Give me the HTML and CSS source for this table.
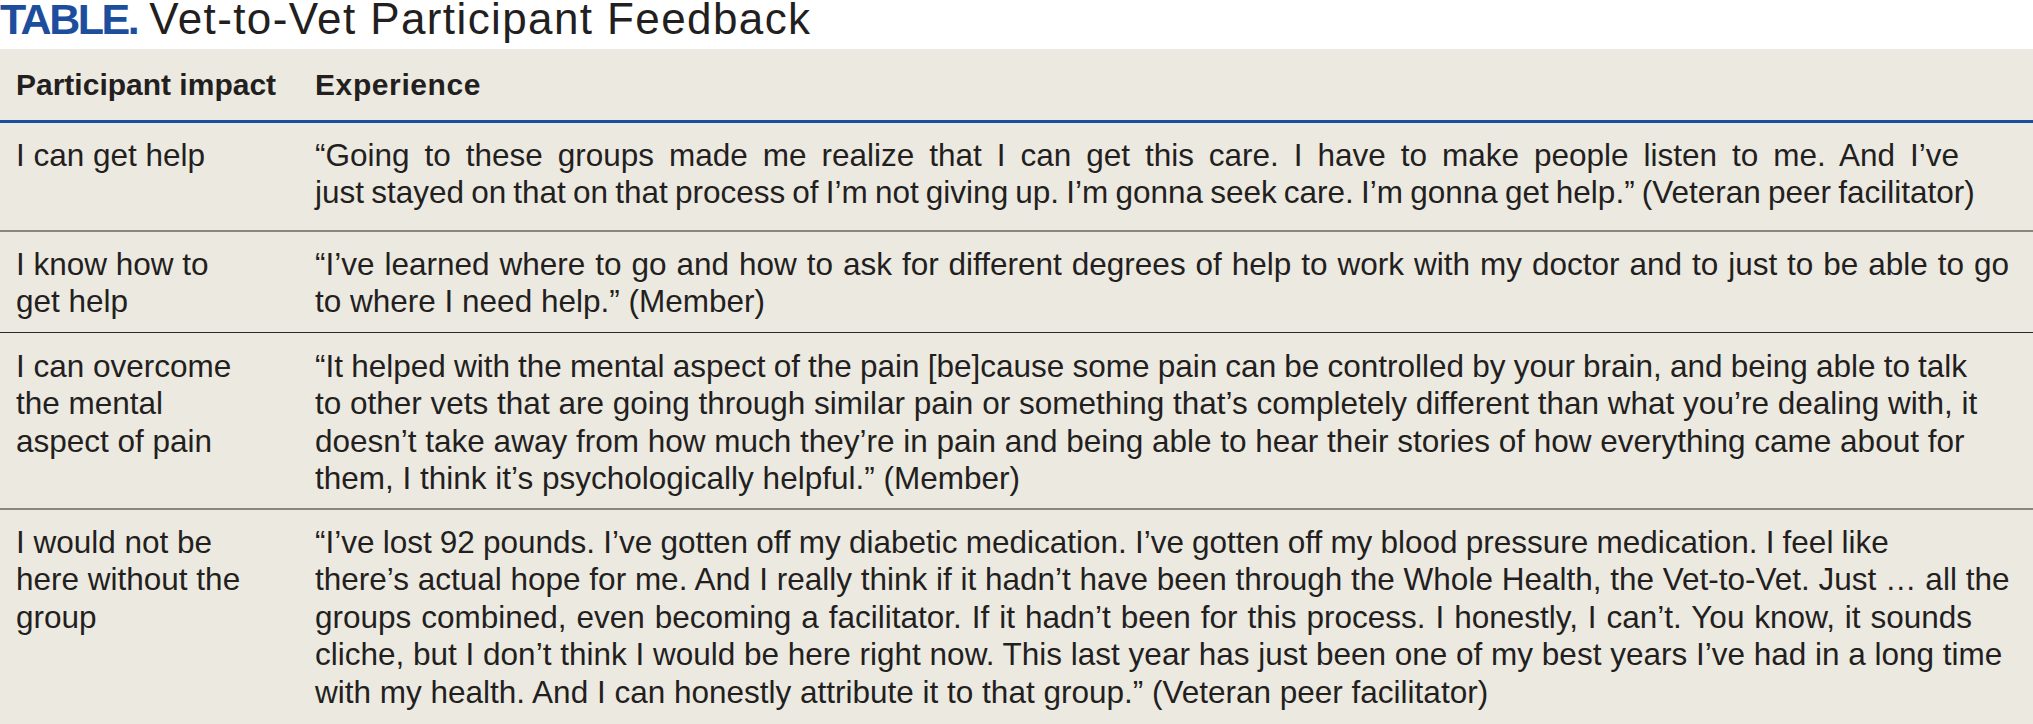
FILE: index.html
```html
<!DOCTYPE html>
<html lang="en">
<head>
<meta charset="utf-8">
<title>TABLE. Vet-to-Vet Participant Feedback</title>
<link rel="stylesheet" href="styles.css">
</head>
<body>
<h1 class="title"><span class="title-label">TABLE.</span> <span class="title-text">Vet-to-Vet Participant Feedback</span></h1>
<table class="feedback">
  <thead>
    <tr>
      <th class="col-impact">Participant impact</th>
      <th class="col-exp">Experience</th>
    </tr>
  </thead>
  <tbody>
    <tr class="row row-1">
      <td class="col-impact">I can get help</td>
      <td class="col-exp"><span class="spread-wide">“Going to these groups made me realize that I can get this care. I have to make people listen to me. And I’ve</span><br><span class="tight">just stayed on that on that process of I’m not giving up. I’m gonna seek care. I’m gonna get help.” (Veteran peer facilitator)</span></td>
    </tr>
    <tr class="row row-2">
      <td class="col-impact">I know how to<br>get help</td>
      <td class="col-exp"><span class="spread">“I’ve learned where to go and how to ask for different degrees of help to work with my doctor and to just to be able to go</span><br>to where I need help.” (Member)</td>
    </tr>
    <tr class="row row-3">
      <td class="col-impact">I can overcome<br>the mental<br>aspect of pain</td>
      <td class="col-exp"><span class="tight-s">“It helped with the mental aspect of the pain [be]cause some pain can be controlled by your brain, and being able to talk</span><br>to other vets that are going through similar pain or something that’s completely different than what you’re dealing with, it<br>doesn’t take away from how much they’re in pain and being able to hear their stories of how everything came about for<br>them, I think it’s psychologically helpful.” (Member)</td>
    </tr>
    <tr class="row row-4">
      <td class="col-impact">I would not be<br>here without the<br>group</td>
      <td class="col-exp"><span class="tight-s">“I’ve lost 92 pounds. I’ve gotten off my diabetic medication. I’ve gotten off my blood pressure medication. I feel like</span><br>there’s actual hope for me. And I really think if it hadn’t have been through the Whole Health, the Vet-to-Vet. Just … all the<br><span class="spread">groups combined, even becoming a facilitator. If it hadn’t been for this process. I honestly, I can’t. You know, it sounds</span><br>cliche, but I don’t think I would be here right now. This last year has just been one of my best years I’ve had in a long time<br>with my health. And I can honestly attribute it to that group.” (Veteran peer facilitator)</td>
    </tr>
  </tbody>
</table>
</body>
</html>
```
FILE: styles.css
```css
html, body {
  margin: 0;
  padding: 0;
  background: #ffffff;
}

body {
  font-family: "Liberation Sans", Arial, sans-serif;
  color: #231f20;
  width: 2033px;
  overflow: hidden;
}

.title {
  margin: 0 0 11px 0;
  font-size: 44px;
  line-height: 38px;
  font-weight: normal;
  white-space: nowrap;
}

.title-label {
  color: #1d4e9d;
  font-weight: bold;
  font-size: 43px;
  letter-spacing: -2.5px;
}

.title-text {
  letter-spacing: 1.4px;
}

.feedback {
  width: 100%;
  border-collapse: collapse;
  background: #ece9e0;
}

.feedback th {
  text-align: left;
  font-weight: bold;
  font-size: 30px;
  line-height: 37.5px;
  padding: 17px 0 16.5px 0;
  border-bottom: 3px solid #1d4e9d;
  vertical-align: top;
  white-space: nowrap;
}

.feedback th.col-exp {
  letter-spacing: 0.6px;
}

.feedback td {
  font-size: 31.5px;
  line-height: 37.5px;
  padding: 13.5px 0 11.5px 0;
  vertical-align: top;
  white-space: nowrap;
}

.col-impact {
  width: 282px;
  padding-left: 16px !important;
}

.col-exp {
  padding-left: 17px !important;
}

.spread {
  word-spacing: 1.2px;
}

.spread-wide {
  word-spacing: 6.2px;
}

.tight {
  word-spacing: -1.6px;
}

.tight-s {
  word-spacing: -0.6px;
}

.row-1 td {
  padding-bottom: 18.5px;
  border-bottom: 2px solid #8a877c;
}

.row-2 td {
  border-bottom: 1px solid #2b2a28;
}

.row-3 td {
  padding-top: 14.5px;
  padding-bottom: 10.5px;
  border-bottom: 2px solid #8a877c;
}

.row-4 td {
  padding-bottom: 13px;
}
```
